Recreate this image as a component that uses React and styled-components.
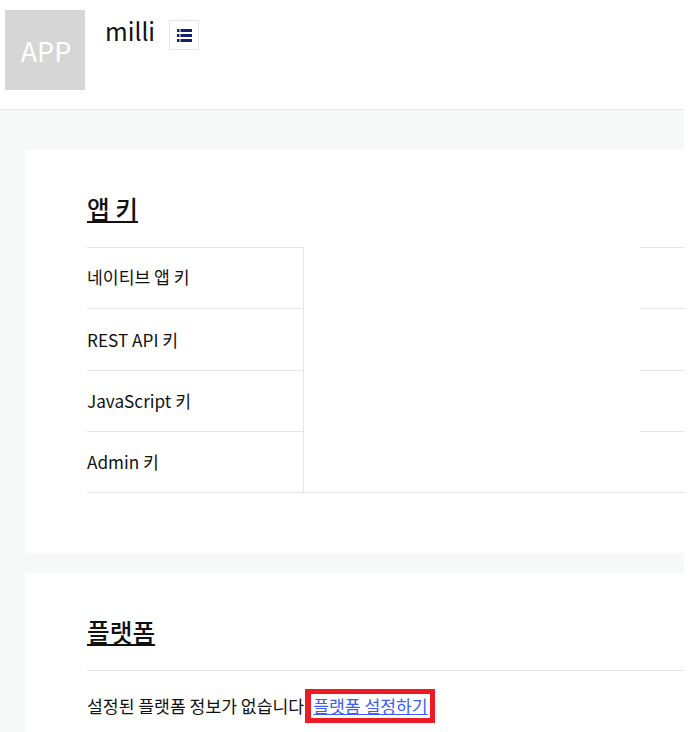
import React from "react";
import styled, { createGlobalStyle } from "styled-components";

const GlobalStyle = createGlobalStyle`
  html, body {
    margin: 0;
    padding: 0;
    background: #fff;
    overflow: hidden;
  }
  body {
    font-family: "Noto Sans CJK KR", "Noto Sans", sans-serif;
    color: #111;
  }
`;

const Page = styled.div`
  width: 684px;
  height: 732px;
  overflow: hidden;
  background: #f7f8f8;
`;

const Header = styled.header`
  display: flex;
  align-items: flex-start;
  padding: 10px 0 0 5px;
  box-sizing: border-box;
  height: 110px;
  background: #fff;
  border-bottom: 1px solid #e5e5e5;
`;

const AppLogo = styled.div`
  display: flex;
  align-items: center;
  justify-content: center;
  width: 80px;
  height: 80px;
  box-sizing: border-box;
  padding-left: 2px;
  background: #d6d6d6;
  color: #fff;
  font-size: 27px;
`;

const AppName = styled.h1`
  margin: 3px 0 0 20px;
  font-size: 24.5px;
  line-height: 36px;
  font-weight: 400;
`;

const MenuButton = styled.button`
  display: flex;
  align-items: center;
  justify-content: center;
  width: 30px;
  height: 30px;
  margin: 10px 0 0 14px;
  padding: 0;
  background: #fff;
  border: 1px solid #e5e5e5;
`;

const Content = styled.main`
  display: flex;
  flex-direction: column;
  gap: 20px;
  padding: 40px 0 0 25px;
`;

const Card = styled.section`
  background: #fff;
  padding: 40px 0 0 62px;
  height: ${(p) => p.$height};
  box-sizing: border-box;
`;

const Title = styled.h2`
  margin: 0;
  font-size: 24.7px;
  line-height: 36px;
  font-weight: 500;
  text-decoration: underline;
  text-decoration-thickness: 2px;
  text-underline-offset: 2px;
`;

const KeyTable = styled.div`
  display: grid;
  grid-template-columns: 217px 336px 1fr;
  grid-auto-rows: 61.25px;
  margin-top: 21px;
  border-bottom: 1px solid #e5e5e5;
`;

const KeyLabel = styled.div`
  display: flex;
  align-items: center;
  grid-column: 1;
  box-sizing: border-box;
  padding-bottom: ${(p) => (p.$first ? "3px" : "0")};
  font-size: 17.2px;
  border-top: 1px solid #e5e5e5;
  border-right: 1px solid #e5e5e5;
`;

const KeyValue = styled.div`
  grid-column: 2;
  grid-row: 1 / span 4;
`;

const KeyEnd = styled.div`
  grid-column: 3;
  border-top: 1px solid #e5e5e5;
`;

const Divider = styled.hr`
  margin: 21px 0 0;
  border: 0;
  border-top: 1px solid #e5e5e5;
`;

const EmptyNote = styled.p`
  display: flex;
  align-items: baseline;
  margin: 18px 0 0;
  font-size: 17.2px;
`;

const SetupLink = styled.a`
  margin-left: 1px;
  padding: 1px 2px;
  border: solid #ed1c24;
  border-width: 5px 5px 5px 6px;
  line-height: 22px;
  color: #3b5bfd;
  text-decoration: underline;
`;

const keys = ["네이티브 앱 키", "REST API 키", "JavaScript 키", "Admin 키"];

export default function App() {
  return (
    <Page>
      <GlobalStyle />
      <Header>
        <AppLogo>APP</AppLogo>
        <AppName>milli</AppName>
        <MenuButton>
          <svg width="15" height="13" viewBox="0 0 15 13" fill="#14206e">
            <rect x="0" y="0" width="2.5" height="3" />
            <rect x="0" y="5" width="2.5" height="3" />
            <rect x="0" y="10" width="2.5" height="3" />
            <rect x="3.5" y="0" width="11.5" height="3" />
            <rect x="3.5" y="5" width="11.5" height="3" />
            <rect x="3.5" y="10" width="11.5" height="3" />
          </svg>
        </MenuButton>
      </Header>
      <Content>
        <Card $height="403px">
          <Title>앱 키</Title>
          <KeyTable>
            {keys.map((k, i) => (
              <React.Fragment key={k}>
                <KeyLabel $first={i === 0}>{k}</KeyLabel>
                <KeyEnd />
              </React.Fragment>
            ))}
            <KeyValue />
          </KeyTable>
        </Card>
        <Card $height="200px">
          <Title>플랫폼</Title>
          <Divider />
          <EmptyNote>
            설정된 플랫폼 정보가 없습니다
            <SetupLink href="#">플랫폼 설정하기</SetupLink>
          </EmptyNote>
        </Card>
      </Content>
    </Page>
  );
}
